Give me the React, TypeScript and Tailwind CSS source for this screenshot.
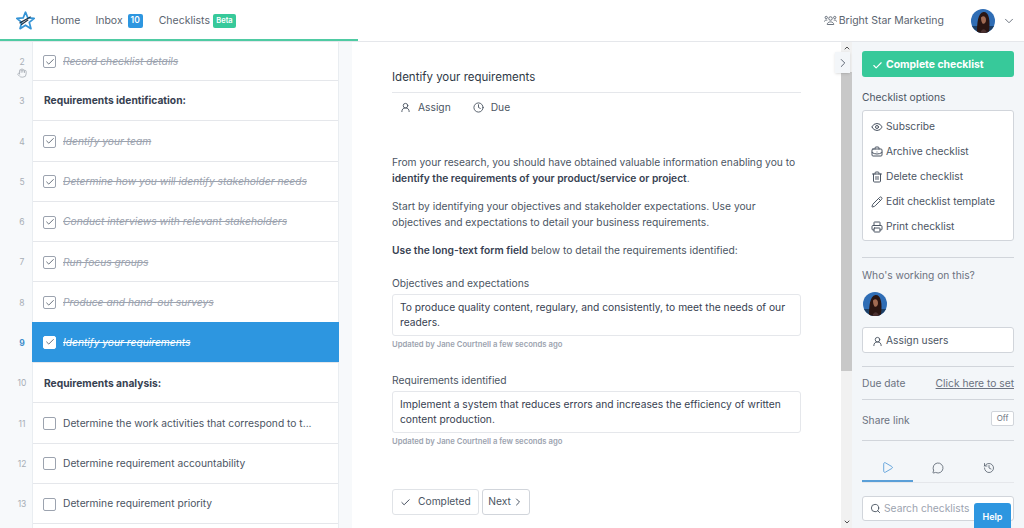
import React from "react";
import { Check, ChevronDown, ChevronRight, ChevronUp, Clock, Eye, BriefcaseBusiness, Trash2, Pencil, Printer, UserRound, Play, MessageCircle, History, Search, Hand } from "lucide-react";

const Avatar = ({ size }: { size: number }) => (
  <svg width={size} height={size} viewBox="0 0 48 48" className="shrink-0">
    <defs>
      <clipPath id={`av${size}`}><circle cx="24" cy="24" r="24" /></clipPath>
    </defs>
    <g clipPath={`url(#av${size})`}>
      <rect width="48" height="48" fill="#2f6db5" />
      <rect y="34" width="48" height="14" fill="#1c3f66" />
      <path d="M12 48 C12 30 13 8 25 6 C35 5 37 20 37 30 C37 38 36 44 35 48 Z" fill="#2a1512" />
      <path d="M20 17 C24 12 30 14 30 22 C30 28 26 31 23 29 C21 26 20 22 20 17Z" fill="#a06a52" />
      <path d="M19 48 C21 38 29 38 32 48Z" fill="#4a3030" />
    </g>
  </svg>
);

const Logo = () => (
  <svg width="19" height="19" viewBox="0 0 24 24" className="shrink-0">
    <path d="M12 1.5 L15 8.8 L23 9.4 L16.8 14.4 L18.9 22.3 L12 18 L5.1 22.3 L7.2 14.4 L1 9.4 L9 8.8 Z" fill="none" stroke="#3594d6" strokeWidth="2.2" strokeLinejoin="round" />
    <path d="M5 15 L18 7.5 M7 17 L15 11.5" stroke="#1f3344" strokeWidth="1.5" strokeLinecap="round" />
  </svg>
);

const Team = () => (
  <svg width="13" height="11" viewBox="0 0 26 22" fill="none" stroke="currentColor" strokeWidth="1.8" className="shrink-0">
    <circle cx="13" cy="7" r="3.5" />
    <path d="M6.5 19 C6.5 12 19.5 12 19.5 19 Z" />
    <circle cx="4.5" cy="5" r="2.3" />
    <circle cx="21.5" cy="5" r="2.3" />
    <path d="M1 13 C1 10.5 4 9.5 6.5 10.5 M25 13 C25 10.5 22 9.5 19.5 10.5" />
  </svg>
);

const Box = ({ checked, active }: { checked?: boolean; active?: boolean }) => (
  <span className={`flex h-[13px] w-[13px] shrink-0 items-center justify-center rounded-[2px] border ${active ? "border-white bg-white" : "border-[#9ca3af] bg-white"}`}>
    {checked && <Check size={10} strokeWidth={2} className="text-[#4b5563]" />}
  </span>
);

type Row = { n: number; t: string; kind: "done" | "head" | "todo" | "active"; h?: string };
const rows: Row[] = [
  { n: 2, t: "Record checklist details", kind: "done", h: "h-[39px]" },
  { n: 3, t: "Requirements identification:", kind: "head" },
  { n: 4, t: "Identify your team", kind: "done" },
  { n: 5, t: "Determine how you will identify stakeholder needs", kind: "done" },
  { n: 6, t: "Conduct interviews with relevant stakeholders", kind: "done" },
  { n: 7, t: "Run focus groups", kind: "done" },
  { n: 8, t: "Produce and hand-out surveys", kind: "done" },
  { n: 9, t: "Identify your requirements", kind: "active" },
  { n: 10, t: "Requirements analysis:", kind: "head" },
  { n: 11, t: "Determine the work activities that correspond to t...", kind: "todo" },
  { n: 12, t: "Determine requirement accountability", kind: "todo" },
  { n: 13, t: "Determine requirement priority", kind: "todo" },
];

const menu = [
  { I: Eye, t: "Subscribe" },
  { I: BriefcaseBusiness, t: "Archive checklist" },
  { I: Trash2, t: "Delete checklist" },
  { I: Pencil, t: "Edit checklist template" },
  { I: Printer, t: "Print checklist" },
];

export default function App() {
  return (
    <div className="flex h-[528px] w-[1024px] flex-col overflow-hidden bg-white text-[10.25px] text-[#4b5563]" style={{ fontFamily: "Inter, 'Liberation Sans', sans-serif" }}>
      <header className="relative flex h-[42px] shrink-0 items-center border-b border-[#e5e7eb] pl-[16px] pr-[8px] text-[10.5px] text-[#5b6470]">
        <Logo />
        <span className="ml-[16px]">Home</span>
        <span className="ml-[15px]">Inbox</span>
        <span className="ml-[5px] flex h-[14px] w-[15px] items-center justify-center rounded-[2px] bg-[#2d96e0] text-[8.5px] font-semibold text-white">10</span>
        <span className="ml-[16px]">Checklists</span>
        <span className="ml-[3px] flex h-[14px] w-[23px] items-center justify-center rounded-[2px] bg-[#37c99a] text-[7.5px] font-semibold text-white">Beta</span>
        <span className="ml-auto mr-[2px]"><Team /></span>
        <span>Bright Star Marketing</span>
        <span className="ml-[27px]"><Avatar size={24} /></span>
        <ChevronDown size={14} strokeWidth={1.5} className="ml-[7px]" />
        <div className="absolute bottom-0 left-0 h-[2px] w-[358px] bg-[#4fcba3]" />
      </header>

      <div className="flex min-h-0 flex-1">
        <aside className="flex w-[352px] shrink-0 overflow-hidden bg-[#f7f9fb] pr-[13px]">
          <div className="w-[32px] shrink-0 pl-[12px]">
            {rows.map((r) => (
              <div key={r.n} className={`relative flex items-center justify-center pt-px text-[8.5px] ${r.h ?? "h-[40.3px]"} ${r.kind === "active" ? "font-bold text-[#3f8ecb]" : "text-[#a8aeb6]"}`}>
                <span>{r.n}</span>
                {r.n === 2 && <Hand size={10} className="absolute left-[5px] top-[26px]" />}
              </div>
            ))}
          </div>
          <div className="min-w-0 flex-1 border-x border-[#e9edf1] bg-white">
            {rows.map((r) => (
              <div
                key={r.n}
                className={`flex items-center gap-[7px] pt-px ${r.h ?? "h-[40.3px]"} ${r.kind === "active" ? "-mx-px -mt-px h-[41.3px] border-b border-b-[#e5e7eb] bg-[#2d96e0] pl-[11px] text-white" : "border-b border-[#e5e7eb] pl-[10px]"}`}
              >
                {r.kind !== "head" && <Box checked={r.kind === "done" || r.kind === "active"} active={r.kind === "active"} />}
                {r.kind === "head" ? (
                  <span className="pl-px font-bold text-[#374151]">{r.t}</span>
                ) : (
                  <span className={r.kind === "done" ? "italic text-[#9ca3af] line-through" : r.kind === "active" ? "italic line-through" : ""}>{r.t}</span>
                )}
              </div>
            ))}
          </div>
        </aside>

        <main className="relative w-[489px] shrink-0 pl-[40px] pr-[40px]">
          <h1 className="mt-[27px] text-[11.5px] leading-[16px] text-[#2f3946]">Identify your requirements</h1>
          <div className="mt-[7px] flex h-[30px] items-center border-t border-[#e5e7eb] pl-[8px]">
            <UserRound size={11} />
            <span className="ml-[7px]">Assign</span>
            <Clock size={11} className="ml-[22px]" />
            <span className="ml-[7px]">Due</span>
          </div>
          <div className="mt-[32px] leading-[16px]">
            <p>From your research, you should have obtained valuable information enabling you to<br /><b className="font-semibold text-[#374151]">identify the requirements of your product/service or project</b>.</p>
            <p className="mt-[12px]">Start by identifying your objectives and stakeholder expectations. Use your<br />objectives and expectations to detail your business requirements.</p>
            <p className="mt-[12px]"><b className="font-semibold text-[#374151]">Use the long-text form field</b> below to detail the requirements identified:</p>
          </div>
          <div className="mt-[18px] leading-[14px]">Objectives and expectations</div>
          <div className="mt-[4px] h-[42px] rounded-[3px] border border-[#e5e7eb] px-[7px] py-[5px] leading-[15px] text-[#374151]">To produce quality content, regulary, and consistently, to meet the needs of our<br />readers.</div>
          <div className="mt-[3px] text-[7.7px] font-semibold leading-[12px] text-[#9ca3af]">Updated by Jane Courtnell a few seconds ago</div>
          <div className="mt-[22px] leading-[14px]">Requirements identified</div>
          <div className="mt-[4px] h-[42px] rounded-[3px] border border-[#e5e7eb] px-[7px] py-[5px] leading-[15px] text-[#374151]">Implement a system that reduces errors and increases the efficiency of written<br />content production.</div>
          <div className="mt-[3px] text-[7.7px] font-semibold leading-[12px] text-[#9ca3af]">Updated by Jane Courtnell a few seconds ago</div>
          <div className="mt-[41px] flex gap-[3px]">
            <button className="flex h-[26px] w-[87px] items-center gap-[7px] rounded-[3px] border border-[#e0e3e7] pl-[7px]"><Check size={11} className="text-[#374151]" />Completed</button>
            <button className="flex h-[26px] w-[48px] items-center justify-center gap-[1px] rounded-[3px] border border-[#d1d5db]">Next<ChevronRight size={12} /></button>
          </div>
          <button className="absolute right-[-9px] top-[10px] z-10 flex h-[21px] w-[15px] items-center justify-center bg-[#f3f6f9] text-[#4b5563] shadow-sm"><ChevronRight size={14} strokeWidth={1.5} /></button>
        </main>

        <div className="flex w-[11px] shrink-0 flex-col items-center bg-[#f1f1f1]">
          <ChevronUp size={8} strokeWidth={3} className="mt-[2px] text-[#505050]" />
          <div className="mt-[20px] h-[299px] w-full bg-[#c8c8c8]" />
          <ChevronDown size={8} strokeWidth={3} className="mt-auto mb-[2px] text-[#505050]" />
        </div>

        <aside className="relative min-w-0 flex-1 bg-[#f3f6f9] px-[10px] pt-[9px]">
          <button className="flex h-[26px] w-full items-center gap-[3px] rounded-[3px] bg-[#37c99a] pl-[10px] pt-[2px] text-[10.4px] font-bold text-white"><Check size={11} strokeWidth={2.5} />Complete checklist</button>
          <div className="mt-[13px] leading-[14px]">Checklist options</div>
          <div className="mt-[6px] flex h-[131px] flex-col rounded-[3px] border border-[#d1d5db] bg-white px-[8px] pt-[3px]">
            {menu.map(({ I, t }) => (
              <div key={t} className="flex h-[25px] shrink-0 items-center gap-[3px]"><I size={12} />{t}</div>
            ))}
          </div>
          <div className="mt-[16px] border-t border-[#d1d5db] pt-[10px] leading-[14px] text-[#6b7280]">Who's working on this?</div>
          <div className="mt-[10px] pl-[1px]"><Avatar size={24} /></div>
          <button className="mt-[11px] flex h-[26px] w-full items-center gap-[3px] rounded-[3px] border border-[#d1d5db] bg-white pl-[9px] pt-[2px]"><UserRound size={11} />Assign users</button>
          <div className="mt-[13px] flex items-center justify-between border-t border-[#d1d5db] pt-[9px] leading-[14px] text-[#6b7280]"><span>Due date</span><span className="underline">Click here to set</span></div>
          <div className="mt-[9px] flex h-[41px] items-center justify-between border-t border-[#d1d5db] text-[#6b7280]"><span className="mt-[2px]">Share link</span><span className="-mt-[4px] flex h-[15px] w-[23px] items-center justify-center rounded-[2px] border border-[#d1d5db] bg-white text-[8px]">Off</span></div>
          <div className="flex h-[43px] border-y border-[#d1d5db] border-b-[#e5e7eb]">
            <div className="flex flex-1 items-center justify-center border-b-2 border-[#5a9fd8] pt-[14px] text-[#4a95d6]"><Play size={13} strokeWidth={1.5} /></div>
            <div className="flex flex-1 items-center justify-center pt-[12px]"><MessageCircle size={12} strokeWidth={1.5} /></div>
            <div className="flex flex-1 items-center justify-center pt-[12px]"><History size={12} strokeWidth={1.5} /></div>
          </div>
          <div className="mt-[13px] flex h-[25px] items-center gap-[3px] rounded-[3px] border border-[#d1d5db] bg-white pl-[7px] text-[#9ca3af]"><Search size={11} className="text-[#4b5563]" />Search checklists</div>
          <button className="absolute bottom-0 right-[13px] h-[25px] w-[37px] rounded-t-[3px] bg-[#2d96e0] pt-[3px] text-[9px] font-semibold text-white">Help</button>
        </aside>
      </div>
    </div>
  );
}
